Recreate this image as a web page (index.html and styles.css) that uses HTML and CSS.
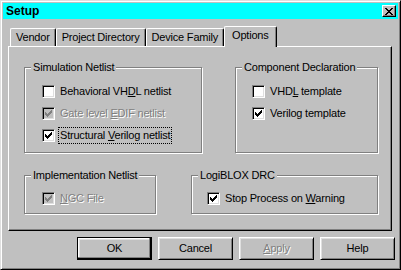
FILE: index.html
```html
<!DOCTYPE html>
<html>
<head>
<meta charset="utf-8">
<link rel="stylesheet" href="styles.css">
</head>
<body>
<div class="window">
  <div class="titlebar">
    <span class="title">Setup</span>
    <span class="close"><svg width="8" height="7" viewBox="0 0 8 7" shape-rendering="crispEdges"><path d="M0 0h2v1h-2zM6 0h2v1h-2zM1 1h2v1h-2zM5 1h2v1h-2zM2 2h4v1h-4zM3 3h2v1h-2zM2 4h4v1h-4zM1 5h2v1h-2zM5 5h2v1h-2zM0 6h2v1h-2zM6 6h2v1h-2z" fill="#000"/></svg></span>
  </div>
  <div class="content">
    <div class="tabs">
      <div class="tab">Vendor</div>
      <div class="tab">Project Directory</div>
      <div class="tab">Device Family</div>
      <div class="tab selected">Options</div>
    </div>
    <div class="panel">
      <div class="row row-top">
        <fieldset class="group sim">
          <legend>Simulation Netlist</legend>
          <div class="opt"><span class="cb"></span><span class="lbl">Behavioral VH<u>D</u>L netlist</span></div>
          <div class="opt disabled"><span class="cb checked"><svg class="chk" width="7" height="7" viewBox="0 0 7 7" shape-rendering="crispEdges"><path d="M6 0h1v1h-1zM5 1h2v1h-2zM0 2h1v1h-1zM4 2h3v1h-3zM0 3h2v1h-2zM3 3h3v1h-3zM0 4h5v1h-5zM1 5h3v1h-3zM2 6h1v1h-1z"/></svg></span><span class="lbl">Gate level <u>E</u>DIF netlist</span></div>
          <div class="opt"><span class="cb checked"><svg class="chk" width="7" height="7" viewBox="0 0 7 7" shape-rendering="crispEdges"><path d="M6 0h1v1h-1zM5 1h2v1h-2zM0 2h1v1h-1zM4 2h3v1h-3zM0 3h2v1h-2zM3 3h3v1h-3zM0 4h5v1h-5zM1 5h3v1h-3zM2 6h1v1h-1z"/></svg></span><span class="lbl focus">Structural <u>V</u>erilog netlist</span></div>
        </fieldset>
        <fieldset class="group comp">
          <legend>Component Declaration</legend>
          <div class="opt"><span class="cb"></span><span class="lbl">VHD<u>L</u> template</span></div>
          <div class="opt"><span class="cb checked"><svg class="chk" width="7" height="7" viewBox="0 0 7 7" shape-rendering="crispEdges"><path d="M6 0h1v1h-1zM5 1h2v1h-2zM0 2h1v1h-1zM4 2h3v1h-3zM0 3h2v1h-2zM3 3h3v1h-3zM0 4h5v1h-5zM1 5h3v1h-3zM2 6h1v1h-1z"/></svg></span><span class="lbl">Verilog template</span></div>
        </fieldset>
      </div>
      <div class="row row-bottom">
        <fieldset class="group impl">
          <legend>Implementation Netlist</legend>
          <div class="opt disabled"><span class="cb checked"><svg class="chk" width="7" height="7" viewBox="0 0 7 7" shape-rendering="crispEdges"><path d="M6 0h1v1h-1zM5 1h2v1h-2zM0 2h1v1h-1zM4 2h3v1h-3zM0 3h2v1h-2zM3 3h3v1h-3zM0 4h5v1h-5zM1 5h3v1h-3zM2 6h1v1h-1z"/></svg></span><span class="lbl"><u>N</u>GC File</span></div>
        </fieldset>
        <fieldset class="group drc">
          <legend>LogiBLOX DRC</legend>
          <div class="opt"><span class="cb checked"><svg class="chk" width="7" height="7" viewBox="0 0 7 7" shape-rendering="crispEdges"><path d="M6 0h1v1h-1zM5 1h2v1h-2zM0 2h1v1h-1zM4 2h3v1h-3zM0 3h2v1h-2zM3 3h3v1h-3zM0 4h5v1h-5zM1 5h3v1h-3zM2 6h1v1h-1z"/></svg></span><span class="lbl">Stop Process on <u>W</u>arning</span></div>
        </fieldset>
      </div>
    </div>
    <div class="buttons">
      <div class="btn default">OK</div>
      <div class="btn">Cancel</div>
      <div class="btn disabled"><u>A</u>pply</div>
      <div class="btn">Help</div>
    </div>
  </div>
</div>
</body>
</html>
```

FILE: styles.css
```css
* { box-sizing: border-box; }
html, body { margin: 0; padding: 0; background: #c0c0c0; }
body {
  width: 401px; height: 270px; overflow: hidden;
  font-family: "Liberation Sans", Arial, sans-serif;
  font-size: 11px; line-height: 13px; color: #000;
  letter-spacing: -0.2px;
}
u { text-decoration: underline; text-underline-offset: 1px; }

.window {
  width: 401px; height: 270px;
  background: #c0c0c0;
  border: 1px solid; border-color: #dfdfdf #000 #000 #dfdfdf;
  box-shadow: inset 1px 1px #fff, inset -1px -1px #808080;
  padding: 2px;
  display: flex; flex-direction: column;
}
.titlebar {
  height: 16px; background: #00ffff;
  display: flex; align-items: center; justify-content: space-between;
  padding: 0 2px 0 3px;
}
.title { font-weight: bold; font-size: 12px; line-height: 14px; letter-spacing: 0; }
.close {
  width: 14px; height: 12px; background: #c0c0c0;
  border: 1px solid; border-color: #fff #000 #000 #fff;
  box-shadow: inset -1px -1px #808080;
  display: flex; align-items: center; justify-content: center;
}

.content { padding: 7px 0 0 5px; display: flex; flex-direction: column; }

.tabs { display: flex; align-items: flex-end; height: 20px; padding-left: 2px; }
.tab {
  height: 18px; padding: 2px 5px 0;
  border-top: 1px solid #fff; border-left: 1px solid #fff; border-right: 1px solid #000;
  border-radius: 2px 2px 0 0;
  box-shadow: inset -1px 0 #808080;
  white-space: nowrap;
}
.tab.selected {
  height: 21px; margin-bottom: -1px; margin-right: -2px;
  padding: 2px 7px 0;
  background: #c0c0c0; position: relative; z-index: 1;
}

.panel {
  width: 384px; height: 185px;
  border: 1px solid; border-color: #fff #000 #000 #fff;
  box-shadow: inset -1px -1px #808080;
  padding: 14px 0 0 15px;
  display: flex; flex-direction: column;
}
.row { display: flex; }
.row-bottom { margin-top: 16px; }

.group {
  margin: 0; padding: 0; min-width: 0;
  border: 1px solid #808080;
  box-shadow: inset 1px 1px #fff, 1px 1px #fff;
  display: flex; flex-direction: column; gap: 9px;
}
.group legend { padding: 0 2px; margin-left: 6px; line-height: 13px; background: #c0c0c0; white-space: nowrap; }
.sim { width: 178px; height: 92px; padding-top: 11px; }
.comp { width: 143px; height: 92px; margin-left: 33px; padding-top: 11px; }
.impl { width: 132px; height: 45px; padding-top: 10px; }
.drc { width: 187px; height: 45px; margin-left: 35px; padding-top: 10px; }
.sim .opt, .impl .opt { margin-left: 17px; }
.comp .opt { margin-left: 16px; }
.drc .opt { margin-left: 15px; }

.opt { display: flex; align-items: center; height: 13px; white-space: nowrap; }
.cb {
  width: 13px; height: 13px; flex: none;
  background: #fff;
  border: 1px solid; border-color: #808080 #fff #fff #808080;
  box-shadow: inset 1px 1px #000, inset -1px -1px #dfdfdf;
  display: flex; align-items: center; justify-content: center;
}
.chk { fill: #000; display: block; }
.lbl { margin-left: 5px; }
.focus { outline: 1px dotted #000; outline-offset: 1px; }
.opt.disabled .cb { background: #c0c0c0; }
.opt.disabled .chk { fill: #808080; }
.opt.disabled .lbl, .btn.disabled { color: #808080; text-shadow: 1px 1px #fff; }

.buttons { display: flex; gap: 6px; margin-top: 6px; padding-left: 69px; }
.btn {
  width: 75px; height: 23px;
  border: 1px solid; border-color: #fff #000 #000 #fff;
  box-shadow: inset 1px 1px #dfdfdf, inset -1px -1px #808080;
  display: flex; align-items: center; justify-content: center;
}
.btn.default {
  border-color: #000;
  box-shadow: inset -1px -1px #000, inset -2px -2px #808080, inset 1px 1px #fff, inset 2px 2px #dfdfdf;
}
```
